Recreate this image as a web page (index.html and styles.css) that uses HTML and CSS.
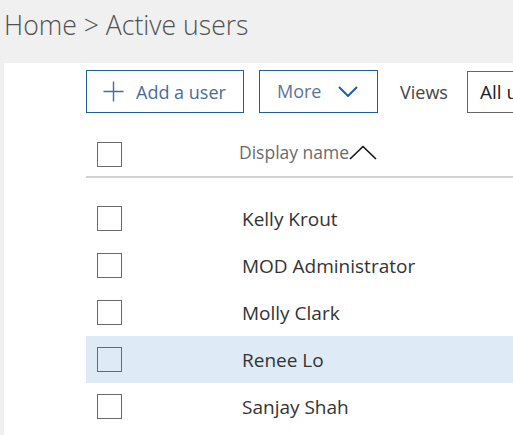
FILE: index.html
```html
<!DOCTYPE html>
<html>
<head>
<meta charset="utf-8">
<link rel="stylesheet" href="styles.css">
</head>
<body>
<div class="page">
  <h1 class="crumb">Home &gt; Active users</h1>
  <div class="panel">
    <div class="toolbar">
      <button class="btn btn-add">
        <svg class="plus" width="21" height="21" viewBox="0 0 21 21"><path d="M10.5 0.5V20.5M0.5 10.5H20.5" stroke="#4a6c97" stroke-width="1.4" fill="none"/></svg>
        <span>Add a user</span>
      </button>
      <button class="btn btn-more">
        <span>More</span>
        <svg class="chev" width="20" height="11" viewBox="0 0 20 11"><path d="M1 1L10 10L19 1" stroke="#1f5f9e" stroke-width="2" fill="none"/></svg>
      </button>
      <span class="views">Views</span>
      <div class="select">All users</div>
    </div>
    <div class="table">
      <div class="row head">
        <span class="cb"></span>
        <span class="col-name">Display name</span>
        <svg class="sort" width="28" height="15" viewBox="0 0 28 15"><path d="M1 14L14 1.5L27 14" stroke="#111" stroke-width="1.6" fill="none"/></svg>
      </div>
      <div class="rows">
        <div class="row"><span class="cb"></span><span class="name">Kelly Krout</span></div>
        <div class="row"><span class="cb"></span><span class="name">MOD Administrator</span></div>
        <div class="row"><span class="cb"></span><span class="name">Molly Clark</span></div>
        <div class="row selected"><span class="cb"></span><span class="name">Renee Lo</span></div>
        <div class="row"><span class="cb"></span><span class="name">Sanjay Shah</span></div>
      </div>
    </div>
  </div>
</div>
</body>
</html>
```
FILE: styles.css
```css
html, body {
  margin: 0;
  padding: 0;
  background: #f0f0f0;
  overflow: hidden;
  font-family: "Open Sans", "Noto Sans", sans-serif;
}
.page {
  width: 513px;
  height: 435px;
  overflow: hidden;
}
.crumb {
  margin: 0;
  height: 63px;
  box-sizing: border-box;
  padding: 5px 0 0 4px;
  font-size: 26.6px;
  font-weight: 300;
  color: #505050;
  line-height: 40px;
  white-space: nowrap;
}
.panel {
  margin-left: 4px;
  background: #fff;
  height: 372px;
  padding-left: 82px;
  box-sizing: border-box;
}
.toolbar {
  display: flex;
  align-items: center;
  padding-top: 7px;
  white-space: nowrap;
  height: 50px;
  box-sizing: border-box;
}
.btn {
  flex: none;
  display: flex;
  align-items: center;
  height: 43px;
  box-sizing: border-box;
  background: #fff;
  border: 1px solid #1f5f9e;
  font-family: inherit;
  font-size: 18px;
  color: #4a6c97;
  padding: 0;
  margin: 0;
}
.btn-add {
  width: 158px;
  padding-left: 16px;
  gap: 12px;
}
.btn-more {
  width: 119px;
  margin-left: 15px;
  padding-left: 17px;
  gap: 17px;
  margin-top: -1px;
}
.btn-more span { color: #5a74a0; }
.plus { flex: none; }
.chev { flex: none; margin-top: 1px; }
.views {
  flex: none;
  margin-left: 22px;
  font-size: 18px;
  color: #444;
}
.select {
  flex: none;
  margin-left: 19px;
  height: 42px;
  box-sizing: border-box;
  border: 1px solid #666;
  padding: 0 12px;
  font-size: 19px;
  line-height: 40px;
  color: #222;
  width: 120px;
}
.row {
  display: flex;
  align-items: center;
  height: 47px;
  white-space: nowrap;
}
.head {
  height: 63px;
  align-items: flex-start;
  border-bottom: 2px solid #d2d2d2;
}
.head .cb { margin-top: 29px; }
.cb {
  flex: none;
  width: 25px;
  height: 25px;
  box-sizing: border-box;
  border: 1px solid #6a6a6a;
  margin-left: 11px;
  background: transparent;
}
.col-name {
  margin-left: 117px;
  font-size: 17.5px;
  color: #6b6b6b;
  line-height: 24px;
  margin-top: 27px;
}
.sort { margin-top: 32px; flex: none; }
.rows { padding-top: 17px; }
.name {
  margin-left: 120px;
  font-size: 19px;
  color: #333;
}
.selected { background: #deebf6; }
```
